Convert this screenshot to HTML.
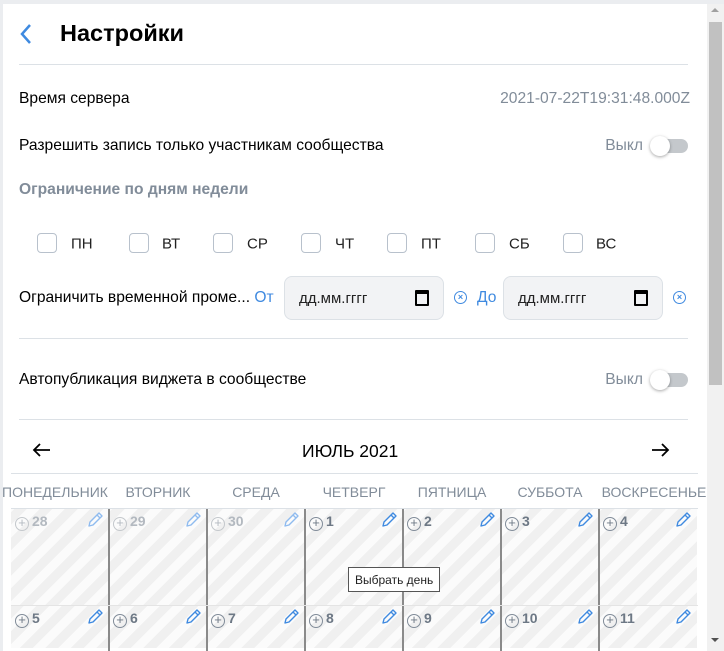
<!DOCTYPE html><html><head><meta charset="utf-8"><style>
*{box-sizing:border-box;margin:0;padding:0}
html,body{width:724px;height:651px;overflow:hidden}
body{background:#ebedf0;font-family:"Liberation Sans",sans-serif;position:relative;color:#000}
.main{position:absolute;left:3px;top:4px;width:704px;height:647px;background:#fff;overflow:hidden}
.abs{position:absolute;white-space:nowrap}
.hr{position:absolute;height:1px;background:#dce1e6}
.t{font-size:15.6px;transform:translateY(-50%)}
.tog{position:absolute;width:36px;height:14px;border-radius:7px;background:#c4c8cc}
.tog:before{content:"";position:absolute;left:-2px;top:-3px;width:20px;height:20px;border-radius:50%;background:#fff;box-shadow:0 1px 3px rgba(0,0,0,.35)}
.cb{position:absolute;width:20px;height:20px;border:1.5px solid #b8c1cc;border-radius:4px;top:229px}
.cl{position:absolute;top:240px;font-size:15px;transform:translateY(-50%);color:#222}
.inp{position:absolute;top:272px;height:44px;width:160px;background:#f2f3f5;border:1px solid #dce1e6;border-radius:8px;font-size:15px;padding:13px 0 0 14px;color:#222}
.cal{position:absolute;right:14px;top:13px;width:14px;height:16px;border:2px solid #000;border-top-width:4px;border-radius:1px}
.x{position:absolute;width:13px;height:13px;border:1.5px solid #3f8ae0;border-radius:50%;color:#3f8ae0;font-size:9px;line-height:10px;text-align:center;font-weight:bold}
.wd{position:absolute;top:480px;font-size:14px;color:#818c99;width:98px;text-align:center}
.cell{position:absolute;width:98px;background:repeating-linear-gradient(-45deg,#f0f0f0 0 9px,#fbfbfb 9px 18px);overflow:hidden}
.num{position:absolute;left:4px;top:4px;font-size:14px;font-weight:bold;color:#6d7885}
.num i{display:inline-block;width:14px;height:14px;border:1.5px solid #818c99;border-radius:50%;font-style:normal;font-size:13px;line-height:10px;text-align:center;margin-right:3px;vertical-align:-1px;font-weight:normal}
.dim{color:#b3b9c0}.dim i{border-color:#c4c8cc}
.pen{position:absolute;right:5px;top:2px}
.sep{position:absolute;width:2px;background:#8a8a8a;top:505px;height:142px}
</style></head><body>
<div class="main">
<svg class="abs" style="left:16px;top:19px" width="14" height="22"><path d="M11 2 3 11l8 9" fill="none" stroke="#3f8ae0" stroke-width="2.5"/></svg>
<div class="abs" style="left:57px;top:16px;font-size:23.5px;font-weight:bold">Настройки</div>
<div class="hr" style="left:16px;top:60px;width:669px"></div>
<div class="abs t" style="left:16px;top:95px">Время сервера</div>
<div class="abs t" style="right:17px;top:95px;color:#818c99">2021-07-22T19:31:48.000Z</div>
<div class="abs t" style="left:16px;top:142px">Разрешить запись только участникам сообщества</div>
<div class="abs t" style="right:64px;top:142px;color:#818c99">Выкл</div>
<div class="tog" style="left:649px;top:135px"></div>
<div class="abs t" style="left:16px;top:186px;color:#818c99;font-weight:bold">Ограничение по дням недели</div>
<div class="cb" style="left:34px"></div><div class="cl" style="left:68px">ПН</div>
<div class="cb" style="left:126px"></div><div class="cl" style="left:159px">ВТ</div>
<div class="cb" style="left:210px"></div><div class="cl" style="left:244px">СР</div>
<div class="cb" style="left:298px"></div><div class="cl" style="left:332px">ЧТ</div>
<div class="cb" style="left:384px"></div><div class="cl" style="left:418px">ПТ</div>
<div class="cb" style="left:472px"></div><div class="cl" style="left:506px">СБ</div>
<div class="cb" style="left:560px"></div><div class="cl" style="left:593px">ВС</div>
<div class="abs t" style="left:16px;top:294px">Ограничить временной проме... <span style="color:#3f8ae0">От</span></div>
<div class="inp" style="left:281px">дд.мм.гггг<div class="cal"></div></div>
<div class="x" style="left:451px;top:287px">×</div>
<div class="abs t" style="left:474px;top:294px;color:#3f8ae0">До</div>
<div class="inp" style="left:500px">дд.мм.гггг<div class="cal"></div></div>
<div class="x" style="left:670px;top:287px">×</div>
<div class="hr" style="left:16px;top:334px;width:669px"></div>
<div class="abs t" style="left:16px;top:376px">Автопубликация виджета в сообществе</div>
<div class="abs t" style="right:64px;top:376px;color:#818c99">Выкл</div>
<div class="tog" style="left:649px;top:369px"></div>
<div class="hr" style="left:16px;top:415px;width:669px"></div>
<svg class="abs" style="left:28px;top:438px" width="20" height="16"><path d="M19 8H3M9 2 3 8l6 6" fill="none" stroke="#000" stroke-width="1.8"/></svg>
<svg class="abs" style="left:648px;top:438px" width="20" height="16"><path d="M1 8h16M11 2l6 6-6 6" fill="none" stroke="#000" stroke-width="1.8"/></svg>
<div class="abs" style="left:299px;top:437px;font-size:17.5px">ИЮЛЬ 2021</div>
<div class="hr" style="left:8px;top:469px;width:687px"></div>
<div class="wd" style="left:-1px;width:106px">ПОНЕДЕЛЬНИК</div><div class="wd" style="left:106px">ВТОРНИК</div><div class="wd" style="left:204px">СРЕДА</div><div class="wd" style="left:302px">ЧЕТВЕРГ</div><div class="wd" style="left:400px">ПЯТНИЦА</div><div class="wd" style="left:498px">СУББОТА</div><div class="wd" style="left:596px;width:110px">ВОСКРЕСЕНЬЕ</div>
<div class="hr" style="left:8px;top:504px;width:687px"></div>
<div id="g"></div>
<div class="abs" style="left:345px;top:563px;width:92px;height:25px;border:1px solid #555;background:#fff;font-size:12px;padding:5px 0 0 6px;color:#222">Выбрать день</div>
</div>
<div class="abs" style="left:707px;top:4px;width:17px;height:647px;background:#f1f1f1"></div>
<div class="abs" style="left:709px;top:22px;width:13px;height:363px;background:#c1c1c1"></div>
<div class="abs" style="left:711px;top:8px;border:4px solid transparent;border-bottom-color:#a0a0a0;border-top:0"></div>
<div class="abs" style="left:711px;top:638px;border:4px solid transparent;border-top-color:#505050;border-bottom:0"></div>
<script>
var g=document.getElementById('g'),h='',n=[['28',1],['29',1],['30',1],['1'],['2'],['3'],['4'],['5'],['6'],['7'],['8'],['9'],['10'],['11']];
var pen='<svg class="pen" width="18" height="18" viewBox="0 0 18 18"><path d="M3 15l1-4L13 2l3 3-9 9zM11 4l3 3" fill="none" stroke="#3f8ae0" stroke-width="1.4" stroke-linejoin="round"/></svg>';
var penl=pen.replace('#3f8ae0','#8fbbef');
for(var i=0;i<14;i++){var c=i%7,r=Math.floor(i/7),x=8+c*98,y=505+r*97,d=n[i][1];
h+='<div class="cell" style="left:'+x+'px;top:'+y+'px;height:'+(r?42:96)+'px"><div class="num'+(d?' dim':'')+'"><i>+</i>'+n[i][0]+'</div>'+(d?penl:pen)+'</div>';}
for(var c=1;c<7;c++)h+='<div class="sep" style="left:'+(7+c*98)+'px"></div>';
h+='<div class="hr" style="left:8px;top:601px;width:687px;background:#e4e4e4"></div>';
g.innerHTML=h;
</script>
</body></html>
